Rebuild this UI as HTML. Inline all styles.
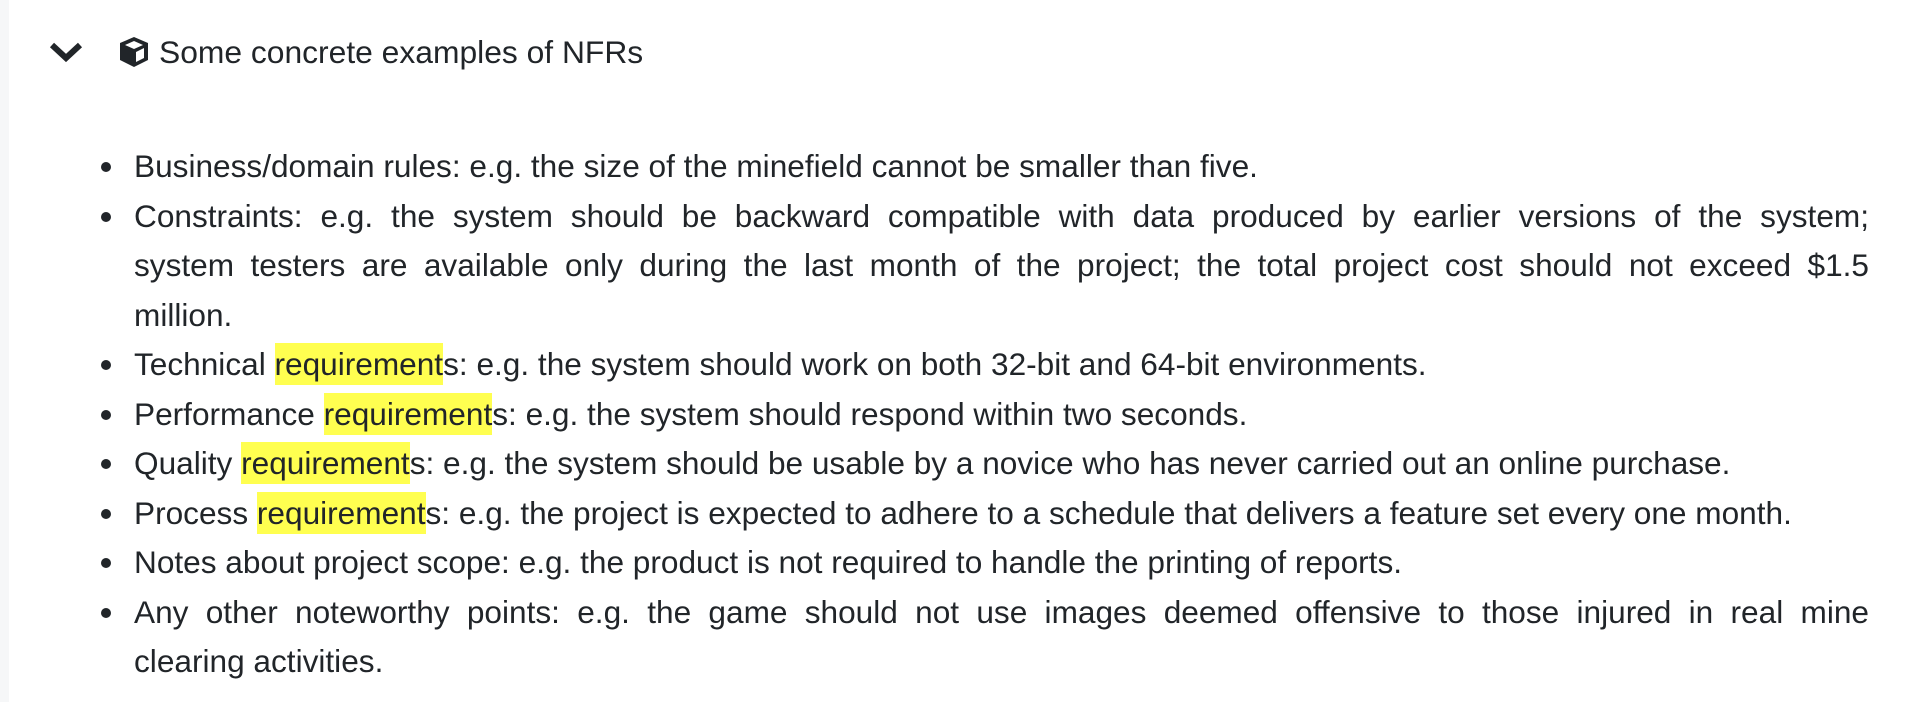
<!DOCTYPE html>
<html><head><meta charset="utf-8"><style>
html,body{margin:0;padding:0;background:#fff;width:1912px;height:702px;overflow:hidden}
body{font-family:"Liberation Sans",sans-serif;color:#212529}
.side{position:absolute;left:0;top:0;width:9px;height:702px;background:#f6f7f8}
.head{position:absolute;left:49px;top:30px;height:44px;display:flex;align-items:center;font-size:31.8px}
.head svg{display:block}
.head .t{margin-left:8px}
ul{position:absolute;left:134px;top:142px;width:1735px;margin:0;padding:0;font-size:31.6px;line-height:49.5px;list-style:none;white-space:nowrap}
li{position:relative}
li::before{content:"";position:absolute;left:-33px;top:20px;width:10px;height:10px;border-radius:50%;background:#212529}
.j{display:block;text-align:justify;text-align-last:justify}
mark{background:#ffff50;color:#212529;padding:3px 0}
</style></head><body>
<div class="side"></div>
<div class="head">
<svg width="34" height="22" viewBox="0 0 34 22"><path d="M3 4 L17 17 L31 4" fill="none" stroke="#212529" stroke-width="6" stroke-linejoin="miter"/></svg>
<svg style="margin-left:34px" width="34" height="34" viewBox="0 0 34 34"><path d="M17 2 L31 8 L31 25 L17 32 L3 25 L3 8 Z" fill="#212529"/><path d="M8 10 L17 6 L26 10 L17 14 Z" fill="#fff"/><path d="M19 17 L27 13 L27 23 L19 27 Z" fill="#fff"/></svg>
<span class="t">Some concrete examples of NFRs</span>
</div>
<ul>
<li>Business/domain rules: e.g. the size of the minefield cannot be smaller than five.</li>
<li><span class="j">Constraints: e.g. the system should be backward compatible with data produced by earlier versions of the system;</span><span class="j">system testers are available only during the last month of the project; the total project cost should not exceed $1.5</span>million.</li>
<li>Technical <mark>requirement</mark>s: e.g. the system should work on both 32-bit and 64-bit environments.</li>
<li>Performance <mark>requirement</mark>s: e.g. the system should respond within two seconds.</li>
<li>Quality <mark>requirement</mark>s: e.g. the system should be usable by a novice who has never carried out an online purchase.</li>
<li>Process <mark>requirement</mark>s: e.g. the project is expected to adhere to a schedule that delivers a feature set every one month.</li>
<li>Notes about project scope: e.g. the product is not required to handle the printing of reports.</li>
<li><span class="j">Any other noteworthy points: e.g. the game should not use images deemed offensive to those injured in real mine</span>clearing activities.</li>
</ul>
</body></html>
